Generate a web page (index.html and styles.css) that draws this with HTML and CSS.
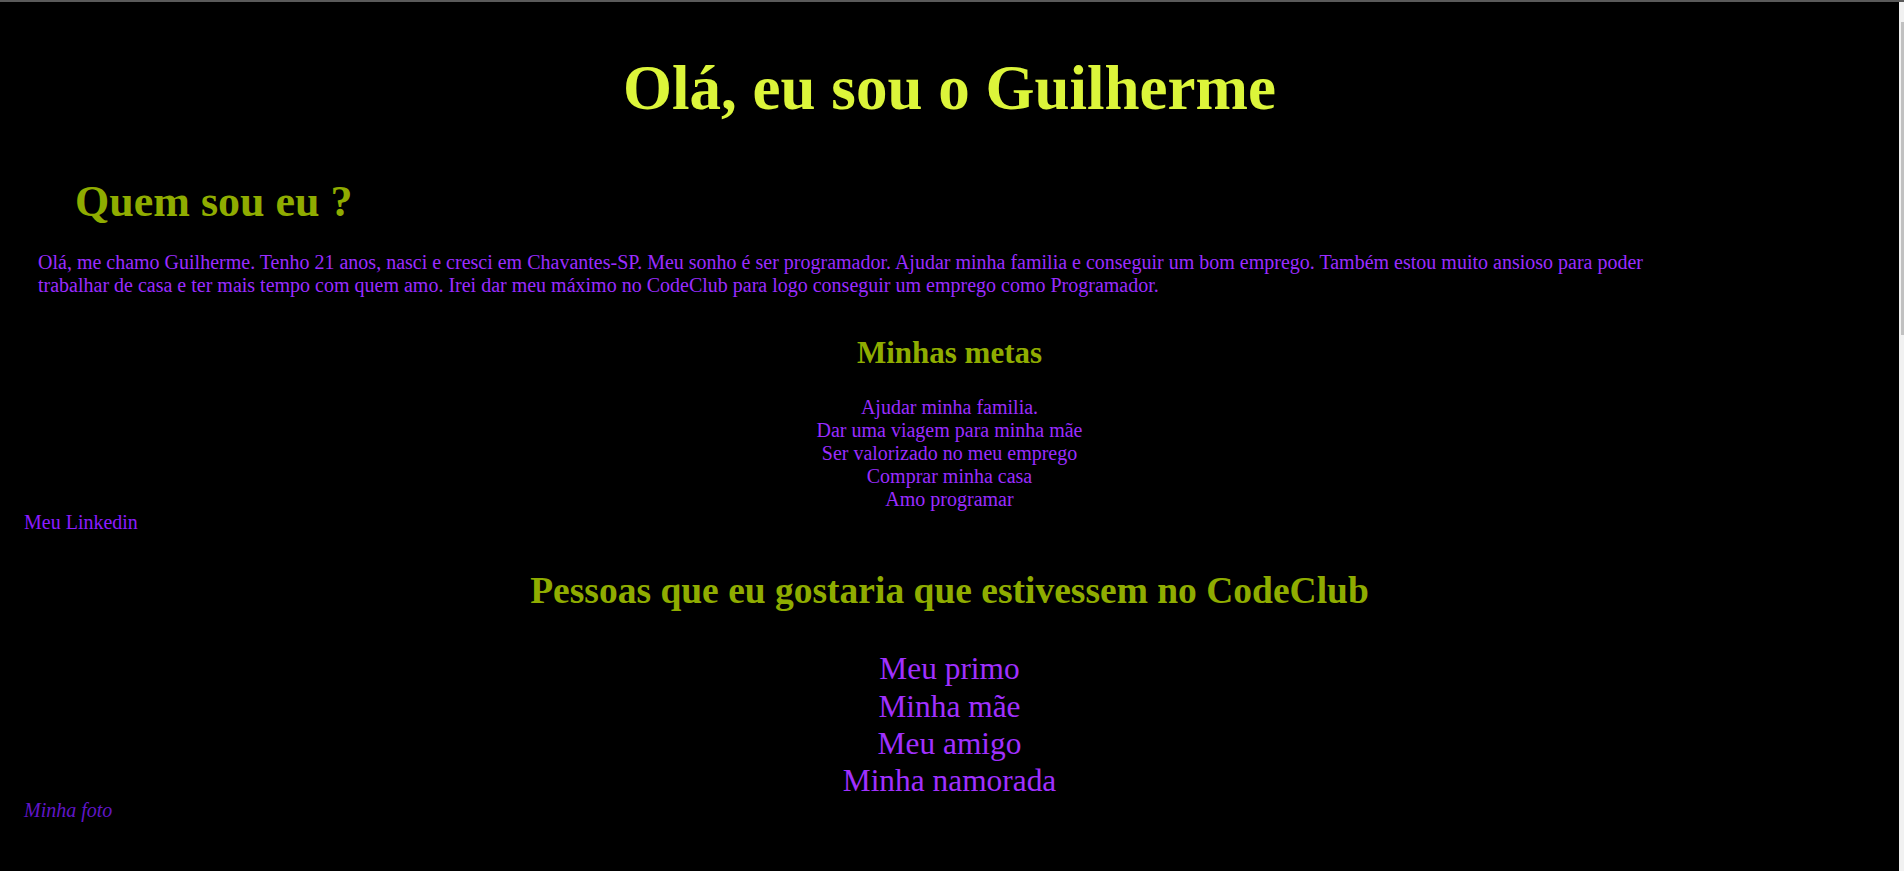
FILE: index.html
```html
<!DOCTYPE html>
<html lang="pt-BR">
<head>
<meta charset="utf-8">
<title>Guilherme</title>
<link rel="stylesheet" href="styles.css">
</head>
<body>
<div class="topline"></div>
<main class="page">
  <h1 class="title">Olá, eu sou o Guilherme</h1>
  <h2 class="about-title">Quem sou eu ?</h2>
  <p class="about">Olá, me chamo Guilherme. Tenho 21 anos, nasci e cresci em Chavantes-SP. Meu sonho é ser programador. Ajudar minha familia e conseguir um bom emprego. Também estou muito ansioso para poder trabalhar de casa e ter mais tempo com quem amo. Irei dar meu máximo no CodeClub para logo conseguir um emprego como Programador.</p>
  <h3 class="goals-title">Minhas metas</h3>
  <ul class="goals">
    <li>Ajudar minha familia.</li>
    <li>Dar uma viagem para minha mãe</li>
    <li>Ser valorizado no meu emprego</li>
    <li>Comprar minha casa</li>
    <li>Amo programar</li>
  </ul>
  <a class="link" href="#">Meu Linkedin</a>
  <h2 class="people-title">Pessoas que eu gostaria que estivessem no CodeClub</h2>
  <ul class="people">
    <li>Meu primo</li>
    <li>Minha mãe</li>
    <li>Meu amigo</li>
    <li>Minha namorada</li>
  </ul>
  <span class="photo">Minha foto</span>
</main>
<div class="scrollbar"><div class="scrollbar-thumb"></div></div>
</body>
</html>
```
FILE: styles.css
```css
html, body {
  margin: 0;
  padding: 0;
  background: #000;
}
body {
  font-family: "Liberation Serif", "Times New Roman", serif;
  font-size: 20px;
  color: #9a2cff;
  min-height: 871px;
}
.topline {
  height: 2px;
  background: #5a5a5a;
}
.page {
  padding: 50px 29px 40px 24px;
}
.title {
  margin: 0;
  font-size: 63px;
  font-weight: bold;
  text-align: center;
  color: #dcf53a;
}
.about-title {
  margin: 51.3px 0 0 51px;
  font-size: 44px;
  font-weight: bold;
  color: #8fac00;
}
.about {
  margin: 23.7px 0 0 14px;
  max-width: 1680px;
  font-size: 20px;
  color: #9a2cff;
}
.goals-title {
  margin: 38px 0 0;
  font-size: 31px;
  font-weight: bold;
  text-align: center;
  color: #8fac00;
}
.goals, .people {
  list-style: none;
  margin: 25.5px 0 0;
  padding: 0;
  text-align: center;
}
.goals {
  font-size: 20px;
}
.link {
  display: block;
  color: #8b1cff;
  text-decoration: none;
}
.people-title {
  margin: 34.4px 0 0;
  font-size: 37.5px;
  font-weight: bold;
  text-align: center;
  color: #8fac00;
}
.people {
  margin-top: 38.4px;
  font-size: 31.4px;
  line-height: 37.3px;
  color: #a030ff;
}
.photo {
  display: block;
  font-style: italic;
  color: #6016c8;
}
.scrollbar {
  position: fixed;
  top: 2px;
  right: 0;
  width: 5px;
  height: 869px;
  background: #f1f1f1;
}
.scrollbar-thumb {
  margin: 20px 0 0 2px;
  width: 3px;
  height: 313px;
  background: #c1c1c1;
}
```
